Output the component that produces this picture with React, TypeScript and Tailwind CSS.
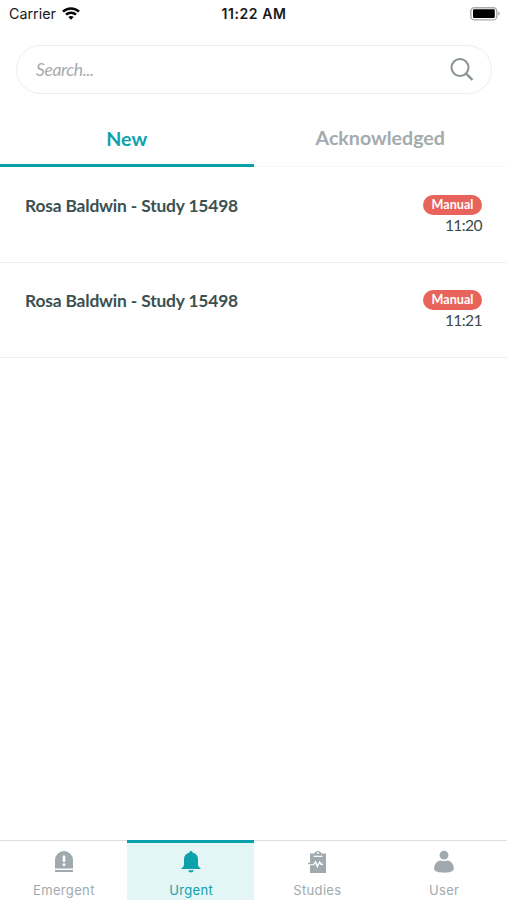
import type { ReactNode } from 'react';

const studies = [
  { title: 'Rosa Baldwin - Study 15498', tag: 'Manual', time: '11:20' },
  { title: 'Rosa Baldwin - Study 15498', tag: 'Manual', time: '11:21' },
];

function StatusBar() {
  return (
    <header className="grid h-7 grid-cols-3 items-center pl-[9px] pr-[7px] font-['Inter',sans-serif] text-[#17191a]">
      <div className="flex items-center gap-1.5">
        <span className="text-[14.3px] leading-7">Carrier</span>
        <svg width="18" height="14" viewBox="0 0 18 14" fill="none" stroke="#050505" strokeWidth="2.5">
          <path d="M1 4.6C5.4 .3 12.6 .3 17 4.6" />
          <path d="M4 7.7c2.8-2.7 7.2-2.7 10 0" />
          <path d="M6.3 10c1.5-1.4 3.9-1.4 5.4 0L9 12.8Z" fill="#050505" stroke="none" />
        </svg>
      </div>
      <span className="-ml-px whitespace-nowrap text-center text-[14px] font-semibold leading-7 tracking-[0.6px]">11:22 AM</span>
      <svg className="justify-self-end" width="30" height="15" viewBox="0 0 30 15">
        <rect x=".8" y=".7" width="26" height="12.2" rx="3.5" fill="#fff" stroke="#aaa" strokeWidth="1.4" />
        <rect x="3" y="2.2" width="21.8" height="8.8" rx="1.2" fill="#000" />
        <path d="M28.3 4.3c2 .8 2 3.6 0 4.4Z" fill="#aaa" />
      </svg>
    </header>
  );
}

function NavItem({ label, active, children }: { label: string; active?: boolean; children: ReactNode }) {
  return (
    <button
      className={
        active
          ? 'flex flex-col items-center border-t-[3px] border-[#07a0ab] bg-[#e4f5f5] pl-[2px] pt-[7px] text-[#0da2ab]'
          : 'flex flex-col items-center border-t border-[#dcdfdf] pl-px pt-[9px] text-[#a0aaae]'
      }
    >
      <svg width="24" height="24" viewBox="0 0 24 24" fill="currentColor">
        {children}
      </svg>
      <span className="mt-[6px] font-['Inter',sans-serif] text-[13px] leading-5 tracking-[0.35px]">{label}</span>
    </button>
  );
}

export default function App() {
  return (
    <div className="flex h-[900px] w-[507px] flex-col overflow-hidden bg-white font-['Lato',sans-serif]">
      <StatusBar />
      <label className="mx-4 mt-[17px] flex h-[49px] w-[476px] shrink-0 items-center justify-between rounded-full border border-[#e9efef] pl-[19px] pr-[17px]">
        <input
          className="w-60 bg-transparent text-[17.5px] italic leading-6 tracking-[-0.4px] outline-none placeholder:text-[#a5abad]"
          placeholder="Search..."
        />
        <svg width="24" height="24" viewBox="0 0 24 24" fill="none" stroke="#899293" strokeWidth="2">
          <circle cx="10" cy="9.500" r="8.500" />
          <path d="m16 15.500 6.500 6.500" strokeWidth="2.4" />
        </svg>
      </label>
      <div className="mt-4 grid h-[57px] shrink-0 grid-cols-2 text-[19.6px] font-bold">
        <button className="border-b-[3px] border-[#07a0ab] pt-[4px] text-[#0da2ab]">New</button>
        <button className="border-b border-[#f7f9f9] text-[#a3abad]">Acknowledged</button>
      </div>
      <main className="flex-1">
        {studies.map((study) => (
          <article
            key={study.time}
            className="flex h-[95px] items-start justify-between border-b border-[#eceff0] px-[25px] pt-[26px] first:h-24 first:pt-[27px]"
          >
            <h2 className="text-[17.4px] font-bold leading-6 tracking-[-0.17px] text-[#3b5151]">{study.title}</h2>
            <div className="flex flex-col items-end">
              <span className="mt-[0.6px] flex h-5 w-[59px] items-center justify-center rounded-full bg-[#e8635a] pt-[2px] text-[12.6px] font-bold text-white">
                {study.tag}
              </span>
              <time className="-mt-[0.6px] text-[15.6px] leading-[22px] tracking-[-0.6px] text-[#3b4b4c]">{study.time}</time>
            </div>
          </article>
        ))}
      </main>
      <nav className="grid h-[60px] shrink-0 grid-cols-4">
        <NavItem label="Emergent">
          <path d="M3 18.500V10a9 9 0 0 1 18 0v8.500Z" />
          <path d="M3 20h18v2H3Z" />
          <path d="M10.700 5.500h2.600V12h-2.600Zm0 8h2.600v2.400h-2.600Z" fill="#fff" />
        </NavItem>
        <NavItem label="Urgent" active>
          <path d="M12 1c.9 0 1.500.7 1.500 1.600 3.400.8 5.500 3.300 5.500 6.700v5.200c0 1.800 1.200 2.500 3 4.500H2c1.800-2 3-2.700 3-4.500V9.300c0-3.400 2.100-5.900 5.500-6.700C10.500 1.700 11.100 1 12 1Z" />
          <path d="M9.300 20.300h5.400c-.3 3-5.100 3-5.400 0Z" />
        </NavItem>
        <NavItem label="Studies">
          <path d="M5 3.500h4.500c.4-3.500 6.600-3.500 7 0H21V23H5Z" />
          <path d="M8.500 6.300h9" fill="none" stroke="#fff" strokeWidth="1.200" />
          <circle cx="13" cy="3" r="1" fill="#fff" />
          <path d="M5 14.500h3.500l2-2.500 1.800 4.500 2.400-4.500 1.300 2.300h2" fill="none" stroke="#fff" strokeWidth="1.500" />
          <path d="M3 13.500h4.500l2-2.500" fill="none" stroke="currentColor" strokeWidth="1.300" />
        </NavItem>
        <NavItem label="User">
          <circle cx="12" cy="5.200" r="4.400" />
          <path d="M2.100 19c.1-5.200 2.800-8.400 6.700-8.600 2 .9 4.400.9 6.400 0 3.900.2 6.600 3.400 6.700 8.600 0 4.900-19.800 4.900-19.800 0Z" />
        </NavItem>
      </nav>
    </div>
  );
}
